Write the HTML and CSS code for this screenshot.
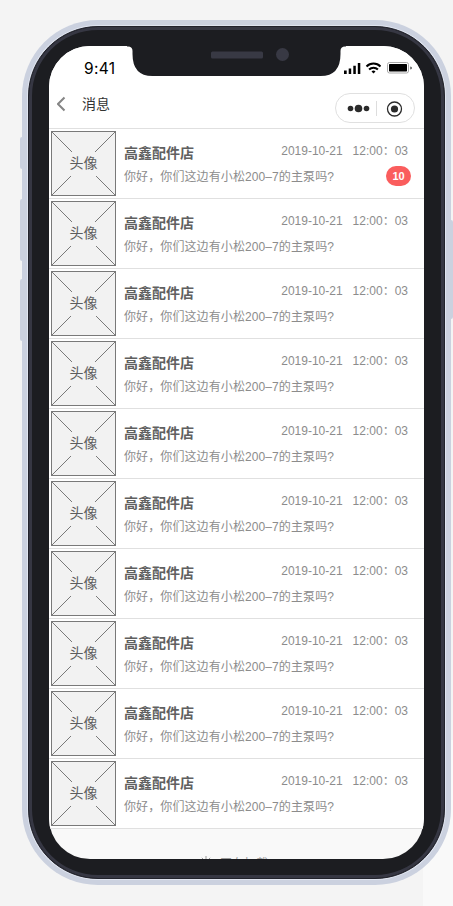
FILE: index.html
```html
<!DOCTYPE html>
<html lang="zh-CN">
<head>
<meta charset="utf-8">
<title>消息</title>
<link rel="stylesheet" href="styles.css">
</head>
<body>
<div class="phone">
  <i class="key mute"></i><i class="key vol-up"></i><i class="key vol-down"></i><i class="key power"></i>
  <div class="bezel">
    <main class="screen">
      <header class="top">
        <div class="status">
          <span class="clock">9:41</span>
          <svg class="signals" width="69" height="14" viewBox="0 0 69 14">
            <path d="M0 9.5h2.700V13H0zM4.7 7.500h2.500V13H4.700zM9.300 4.800h2.500V13H9.300zM13.800 2h2.500v11h-2.500z"/>
            <g fill="none" stroke="#000" stroke-width="2"><path d="M22.500 5.500a9.800 9.800 0 0 1 14 0M25.100 8.500a6.200 6.200 0 0 1 8.800 0"/></g>
            <path d="M27.500 10.500a3 3 0 0 1 4 0L29.500 12.500z"/>
            <rect x="43.500" y="1.500" width="21" height="10.500" rx="2" fill="none" stroke="#aaa"/>
            <rect x="45" y="3" width="18" height="7.500" rx=".7"/><path d="M66.500 5.500c1.500.5 1.500 2.500 0 3z"/>
          </svg>
        </div>
        <div class="nav">
          <svg class="back" width="10" height="16" viewBox="0 0 10 16"><path d="M7.500 1.500 1 8 7.500 14.500" fill="none" stroke="#858585" stroke-width="2"/></svg>
          <h1>消息</h1>
          <div class="capsule">
            <svg width="78" height="28" viewBox="0 0 78 28"><g fill="#2b2b2b"><circle cx="14.500" cy="14.500" r="2.800"/><circle cx="22.500" cy="14.500" r="3.800"/><circle cx="30.500" cy="14.500" r="2.800"/><circle cx="58.500" cy="15" r="3.600"/></g><path d="M40.500 7v15" stroke="#ddd"/><circle cx="58.500" cy="15" r="7" fill="none" stroke="#2b2b2b" stroke-width="1.300"/></svg>
          </div>
        </div>
      </header>
      <div class="list" id="list"></div>
      <footer class="loading">
        <svg width="12" height="12" viewBox="0 0 12 12"><path d="M6 0v3.500M6 8.500V12M0 6h3.500M8.500 6H12M1.800 1.800l2.400 2.400M7.800 7.800l2.400 2.400M10.200 1.800 7.800 4.200M4.200 7.800l-2.400 2.400" stroke="#999"/></svg>
        <span>正在加载</span>
      </footer>
      <svg class="notch" width="219" height="30" viewBox="0 0 219 30"><path d="M0 0h219v.5h-1q-4.500 0-4.500 4.500v3q0 22-20 22H25.500Q5.500 30 5.500 8V5Q5.500.5 1 .5H0z" fill="#1c1d21"/><rect x="84" y="5.500" width="52" height="7" rx="1.500" fill="#383944"/><circle cx="155.500" cy="8.500" r="6.500" fill="#383944"/></svg>
    </main>
  </div>
</div>
<script src="app.js"></script>
</body>
</html>
```
FILE: styles.css
```css
* { box-sizing: border-box; }
html, body { margin: 0; width: 453px; height: 906px; overflow: hidden; }
body { background: linear-gradient(#f9f9f9, #f9f9f9) 423px 740px / 30px 166px no-repeat #f4f4f4; font-family: "Liberation Sans", "Noto Sans CJK SC", sans-serif; }
.phone { position: relative; width: 429px; height: 865px; margin: 20px 0 0 22px; padding: 6px; border-radius: 76px; background: #cbd1df; }
.bezel { width: 417px; height: 853px; padding: 19px 19px 19px 20px; border: 1px solid #22232c; border-radius: 70px; background: #1c1d21; box-shadow: inset 0 0 0 3px #363743, 0 0 0 1px #dfe4ef; }
.screen { position: relative; width: 375px; height: 813px; overflow: hidden; border-radius: 41px; background: #f9f9f9; }
.key { position: absolute; left: -2px; width: 4px; border-radius: 2px 0 0 2px; background: #cbd1df; }
.mute { top: 117px; height: 32px; }
.vol-up { top: 179px; height: 62px; }
.vol-down { top: 259px; height: 62px; }
.power { left: auto; right: -2px; top: 200px; height: 99px; border-radius: 0 2px 2px 0; }
.top { height: 83px; border-bottom: 1px solid #e0e0e0; background: #fff; }
.status { height: 42px; padding: 14px 11px 0 35px; display: flex; justify-content: space-between; }
.clock { font: 400 15.5px/18px Inter, sans-serif; letter-spacing: .3px; color: #000; }
.signals { margin-top: 1px; }
.nav { display: flex; align-items: center; height: 40px; padding: 0 9px 0 8px; }
.back { margin-top: -8px; }
h1 { margin: -8px 0 0 15px; font-size: 14px; line-height: 20px; font-weight: 400; color: #333; }
.capsule { width: 80px; height: 30px; margin: -1px 0 0 auto; border: 1px solid #e0e0e0; border-radius: 15px; }
.capsule svg { display: block; }
.row { display: flex; height: 70px; padding: 2px 16px 0 2px; border-bottom: 1px solid #e0e0e0; background: #fff; }
.avatar { display: grid; place-items: center; width: 65px; height: 65px; color: #5c5c5c; font-size: 14px; line-height: 20px; }
.avatar > * { grid-area: 1 / 1; }
.avatar span { margin-top: -2px; }
.info { position: relative; flex: 1; margin-left: 8px; padding-top: 12px; }
.head { display: flex; justify-content: space-between; height: 20px; }
h2 { margin: 0; font-size: 14px; line-height: 20px; color: #606060; }
.time { display: flex; font-size: 12px; line-height: 16px; color: #8c8c8c; }
.clocktime { margin-left: 10px; }
p { margin: 5px 0 0; font-size: 12px; line-height: 18px; letter-spacing: .1px; color: #8c8c8c; }
.badge { position: absolute; right: -3px; top: 35px; width: 25px; height: 20px; border-radius: 10px; background: #fa5d5d; color: #fff; font: 700 11px/20px "Liberation Sans", sans-serif; text-align: center; }
.loading { display: flex; justify-content: center; gap: 8px; padding: 27px 5px 0 0; color: #999; font-size: 12px; line-height: 17px; }
.notch { position: absolute; left: 78px; top: 0; }
```
FILE: app.js
```js
const list = document.getElementById('list');
for (let i = 0; i < 10; i++) {
  list.insertAdjacentHTML('beforeend', `<article class="row">
    <div class="avatar"><svg width="65" height="65" viewBox="0 0 65 65"><rect x=".5" y=".5" width="64" height="64" fill="#f2f2f2" stroke="#797979"/><path d="M1 1l20 20M64 1 44 21M1 64l19-19M64 64 45 45" stroke="#797979"/></svg><span>头像</span></div>
    <div class="info"><div class="head"><h2>高鑫配件店</h2><div class="time"><span>2019-10-21</span><span class="clocktime">12:00\uFF1A03</span></div></div>
    <p>你好\uFF0C你们这边有小松200–7的主泵吗?</p>${i === 0 ? '<span class="badge">10</span>' : ''}</div>
  </article>`);
}
```
